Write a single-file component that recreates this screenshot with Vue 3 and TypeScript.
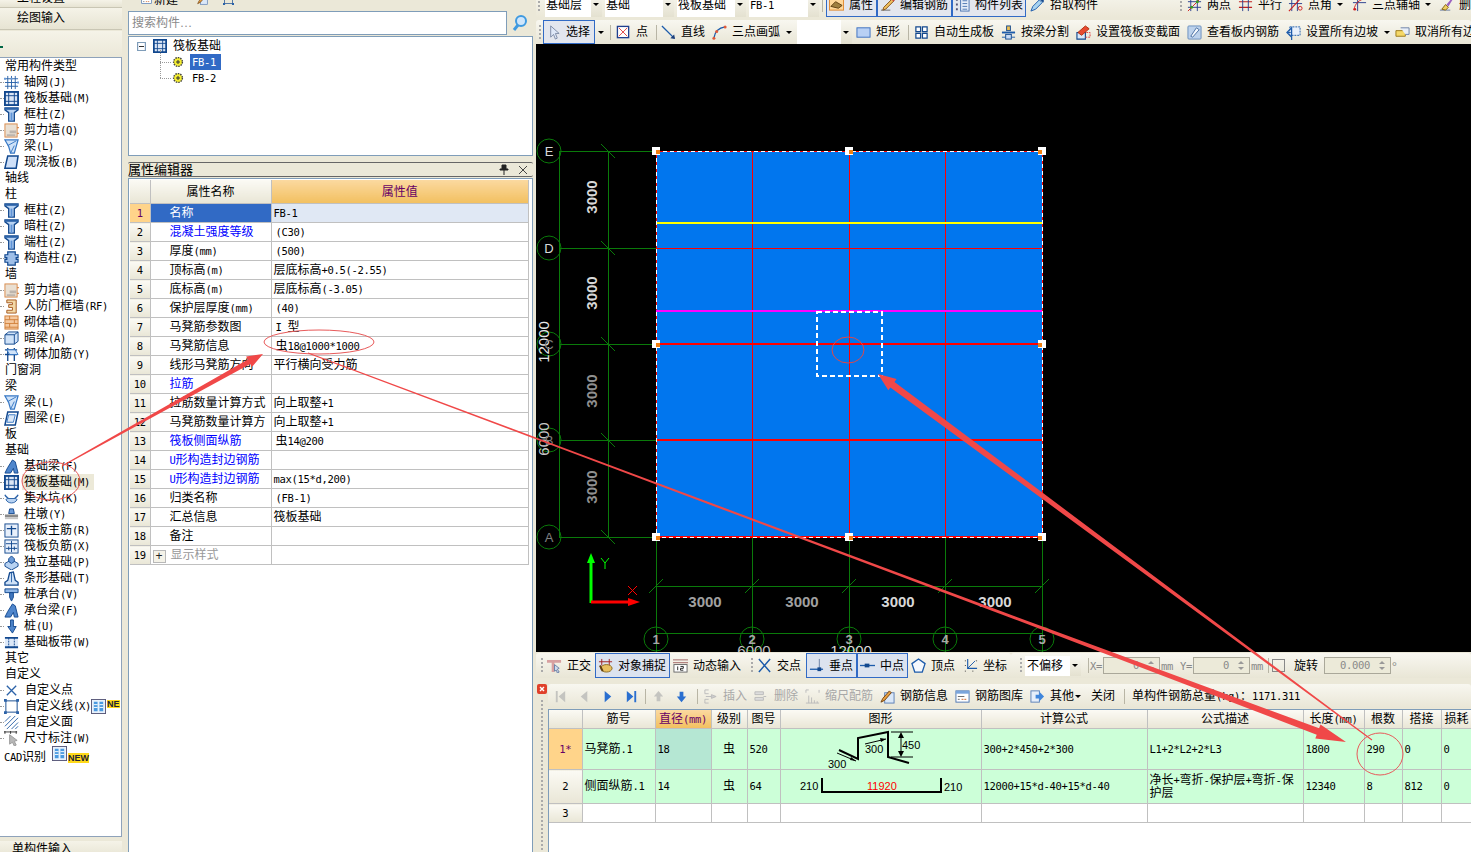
<script setup lang="ts">
import { h, type FunctionalComponent } from 'vue'

const Tx: FunctionalComponent<{ t: string }> = (p) =>
  p.t
    .split(/([\x20-\x7e]+)/)
    .filter(Boolean)
    .map((s) => (/^[\x20-\x7e]/.test(s) ? h('span', { class: 'lat' }, s) : s))
Tx.props = ['t']

type SideRow = { t: string; i?: string; hl?: boolean; badge?: boolean; wide?: boolean }
const sideRows: SideRow[] = [
  { t: '常用构件类型' },
  { t: '轴网(J)', i: 'grid' }, { t: '筏板基础(M)', i: 'raft' }, { t: '框柱(Z)', i: 'col' },
  { t: '剪力墙(Q)', i: 'wall' }, { t: '梁(L)', i: 'beam' }, { t: '现浇板(B)', i: 'slab' },
  { t: '轴线' }, { t: '柱' },
  { t: '框柱(Z)', i: 'col' }, { t: '暗柱(Z)', i: 'col' }, { t: '端柱(Z)', i: 'col' }, { t: '构造柱(Z)', i: 'colf' },
  { t: '墙' },
  { t: '剪力墙(Q)', i: 'wall' }, { t: '人防门框墙(RF)', i: 'rf' }, { t: '砌体墙(Q)', i: 'brick' },
  { t: '暗梁(A)', i: 'dark' }, { t: '砌体加筋(Y)', i: 'rebar' },
  { t: '门窗洞' }, { t: '梁' },
  { t: '梁(L)', i: 'beam' }, { t: '圈梁(E)', i: 'ring' },
  { t: '板' }, { t: '基础' },
  { t: '基础梁(F)', i: 'fbeam' }, { t: '筏板基础(M)', i: 'raft', hl: true }, { t: '集水坑(K)', i: 'pit' },
  { t: '柱墩(Y)', i: 'pier' }, { t: '筏板主筋(R)', i: 'main' }, { t: '筏板负筋(X)', i: 'neg' },
  { t: '独立基础(P)', i: 'iso' }, { t: '条形基础(T)', i: 'strip' }, { t: '桩承台(V)', i: 'cap' },
  { t: '承台梁(F)', i: 'fbeam' }, { t: '桩(U)', i: 'pile' }, { t: '基础板带(W)', i: 'band' },
  { t: '其它' }, { t: '自定义' },
  { t: '自定义点', i: 'pt', wide: true }, { t: '自定义线(X)', i: 'sq', badge: true, wide: true },
  { t: '自定义面', i: 'face', wide: true }, { t: '尺寸标注(W)', i: 'dim' },
  { t: 'CAD识别', badge: true },
]

const props = [
  ['名称', 'FB-1', 0], ['混凝土强度等级', ' (C30)', 1], ['厚度(mm)', ' (500)', 0], ['顶标高(m)', '层底标高+0.5(-2.55)', 0],
  ['底标高(m)', '层底标高(-3.05)', 0], ['保护层厚度(mm)', ' (40)', 0], ['马凳筋参数图', ' I 型', 0], ['马凳筋信息', ' 虫18@1000*1000', 0],
  ['线形马凳筋方向', '平行横向受力筋', 0], ['拉筋', '', 1], ['拉筋数量计算方式', '向上取整+1', 0], ['马凳筋数量计算方', '向上取整+1', 0],
  ['筏板侧面纵筋', ' 虫14@200', 1], ['U形构造封边钢筋', '', 1], ['U形构造封边钢筋', 'max(15*d,200)', 1], ['归类名称', ' (FB-1)', 0],
  ['汇总信息', '筏板基础', 0], ['备注', '', 0], ['显示样式', '', 2],
] as [string, string, number][]

type Item = { a: number; b: number; i?: string; t?: string; on?: boolean; off?: boolean; sep?: boolean; dd?: boolean; box?: boolean; grip?: boolean; ml?: number }
function lay(start: number, items: Item[]): Item[] {
  let p = start
  return items.map((it) => { const r = { ...it, ml: it.a - p }; p = it.b; return r })
}
const rowTop = lay(536, [
  { a: 538, b: 540, grip: true },
  { a: 545, b: 602, t: '基础层', box: true, dd: true }, { a: 605, b: 674, t: '基础', box: true, dd: true },
  { a: 677, b: 746, t: '筏板基础', box: true, dd: true }, { a: 749, b: 819, t: 'FB-1', box: true, dd: true },
  { a: 822, b: 823, sep: true },
  { a: 826, b: 877, i: 'prop', t: '属性', on: true }, { a: 877, b: 952, i: 'edit', t: '编辑钢筋', on: true }, { a: 952, b: 1026, i: 'list', t: '构件列表', on: true },
  { a: 1030, b: 1103, i: 'pick', t: '拾取构件' },
  { a: 1180, b: 1182, grip: true },
  { a: 1187, b: 1230, i: 'two', t: '两点' }, { a: 1238, b: 1282, i: 'par', t: '平行' }, { a: 1288, b: 1332, i: 'ang', t: '点角', dd: true },
  { a: 1352, b: 1423, i: 'arcx', t: '三点辅轴', dd: true }, { a: 1439, b: 1480, i: 'del', t: '删除' },
])
const rowDraw = lay(536, [
  { a: 539, b: 541, grip: true },
  { a: 543, b: 595, i: 'sel', t: '选择', on: true }, { a: 597, b: 605, dd: true }, { a: 610, b: 611, sep: true },
  { a: 616, b: 650, i: 'point', t: '点' }, { a: 656, b: 657, sep: true }, { a: 661, b: 705, i: 'line', t: '直线' },
  { a: 712, b: 780, i: 'arc', t: '三点画弧' }, { a: 785, b: 793, dd: true },
  { a: 797, b: 852, box: true, dd: true }, { a: 856, b: 901, i: 'rect', t: '矩形' }, { a: 908, b: 909, sep: true },
  { a: 914, b: 993, i: 'auto', t: '自动生成板' }, { a: 1001, b: 1068, i: 'split', t: '按梁分割' },
  { a: 1076, b: 1180, i: 'vary', t: '设置筏板变截面' }, { a: 1187, b: 1279, i: 'view', t: '查看板内钢筋' },
  { a: 1286, b: 1378, i: 'slope', t: '设置所有边坡' }, { a: 1383, b: 1391, dd: true }, { a: 1395, b: 1500, i: 'cancel', t: '取消所有边坡' },
])
const rowSnap = lay(536, [
  { a: 541, b: 543, grip: true },
  { a: 547, b: 590, i: 'ortho', t: '正交' }, { a: 595, b: 670, i: 'snap', t: '对象捕捉', on: true }, { a: 673, b: 741, i: 'dyn', t: '动态输入' },
  { a: 751, b: 753, grip: true },
  { a: 757, b: 801, i: 'cross', t: '交点' }, { a: 806, b: 857, i: 'perp', t: '垂点', on: true }, { a: 857, b: 908, i: 'mid', t: '中点', on: true },
  { a: 911, b: 954, i: 'vertex', t: '顶点' }, { a: 963, b: 1006, i: 'coord', t: '坐标' },
])
const rowEdit = lay(548, [
  { a: 553, b: 567, i: 'first', off: true }, { a: 577, b: 591, i: 'prev', off: true }, { a: 600, b: 614, i: 'next' }, { a: 624, b: 638, i: 'last' },
  { a: 645, b: 646, sep: true }, { a: 651, b: 665, i: 'up', off: true }, { a: 674, b: 688, i: 'down' }, { a: 697, b: 698, sep: true },
  { a: 703, b: 746, i: 'ins', t: '插入', off: true }, { a: 754, b: 797, i: 'rem', t: '删除', off: true }, { a: 805, b: 873, i: 'scale', t: '缩尺配筋', off: true },
  { a: 880, b: 947, i: 'info', t: '钢筋信息' }, { a: 955, b: 1023, i: 'lib', t: '钢筋图库' }, { a: 1030, b: 1072, i: 'other', t: '其他' },
  { a: 1074, b: 1082, dd: true }, { a: 1091, b: 1115, t: '关闭' }, { a: 1124, b: 1125, sep: true }, { a: 1132, b: 1320, t: '单构件钢筋总量(kg)：1171.311' },
])

const gridCols = [33, 73, 56, 36, 33, 201, 166, 156, 61, 38, 39, 31]
const gridHead = ['', '筋号', '直径(mm)', '级别', '图号', '图形', '计算公式', '公式描述', '长度(mm)', '根数', '搭接', '损耗']

function taper(x0: number, y0: number, x1: number, y1: number, stops: [number, number][], hl: number, hw: number) {
  const len = Math.hypot(x1 - x0, y1 - y0)
  const ux = (x1 - x0) / len, uy = (y1 - y0) / len
  const nx = -uy, ny = ux
  const shaft = len - hl
  const at = (t: number, w: number, s: number) => [x0 + ux * shaft * t + s * nx * w / 2, y0 + uy * shaft * t + s * ny * w / 2]
  const bx = x1 - ux * hl, by = y1 - uy * hl
  const pts = [
    ...stops.map(([t, w]) => at(t, w, 1)),
    [bx + nx * hw / 2, by + ny * hw / 2], [x1, y1], [bx - nx * hw / 2, by - ny * hw / 2],
    ...stops.slice().reverse().map(([t, w]) => at(t, w, -1)),
  ]
  return pts.map((q) => q[0].toFixed(1) + ',' + q[1].toFixed(1)).join(' ')
}
const arrowA = taper(62, 466, 263, 354, [[0, 1], [1, 5]], 16, 12)
const arrowB = taper(308, 353, 1346, 742, [[0, 1.2], [0.7, 2.8], [1, 7]], 30, 15)
const arrowC = taper(1372, 740, 878, 374, [[0, 1], [1, 7]], 18, 14)

const colX = [656, 752, 849, 945, 1042]
const rowY = [151, 248, 344, 440, 537]
const handles = [[656, 151], [849, 151], [1042, 151], [656, 344], [1042, 344], [656, 537], [849, 537], [1042, 537]]
const vDims = [[197, '#d8d8d8'], [293, '#d8d8d8'], [391, '#909090'], [487, '#909090']] as [number, string][]
const hDims = [[705, '#a0a0a0'], [802, '#a0a0a0'], [898, '#d8d8d8'], [995, '#d8d8d8']] as [number, string][]
</script>

<template>
  <div class="app">
    <svg class="defs" width="0" height="0" aria-hidden="true">
      <defs>
        <symbol id="i-grid" viewBox="0 0 16 16"><path d="M1 4h14M1 8h14M1 12h14M4 1v14M8 1v14M12 1v14" stroke="#2b62a8" fill="none"/><path d="M0 3h2v2H0zM7 3h2v2H7zM14 7h2v2h-2z" fill="#6a9ad8"/></symbol>
        <symbol id="i-raft" viewBox="0 0 16 16"><rect x="1" y="1" width="14" height="14" fill="#dbe6f5" stroke="#12488e" stroke-width="2"/><path d="M5 1v14M11 1v14M1 5h14M1 11h14" stroke="#12488e"/></symbol>
        <symbol id="i-col" viewBox="0 0 16 16"><path d="M1 1h14v2l-4 3v9H5V6L1 3z" fill="#b7d2f2" stroke="#12488e" stroke-width="1.4"/><path d="M1 1h14v2H1z" fill="#2b62a8"/><path d="M7 6h2v9H7z" fill="#5e93d6"/></symbol>
        <symbol id="i-colf" viewBox="0 0 16 16"><path d="M4 1h8v3h3v3h-2v2h2v3h-3v3H4v-3H1V9h2V7H1V4h3z" fill="#9fbfe8" stroke="#12488e" stroke-width="1.3"/></symbol>
        <symbol id="i-wall" viewBox="0 0 16 16"><rect x="1" y="1" width="13" height="14" fill="#e9dfd2" stroke="#d88a4a"/><path d="M3 12h9v2H3zM6 8h7v3H6z" fill="#bdb5ad"/><path d="M14 5h2M14 11h2" stroke="#d0702a"/></symbol>
        <symbol id="i-beam" viewBox="0 0 16 16"><path d="M1 1h14l-4 14H7L5 8z" fill="#cfe2f8" stroke="#3677c4" stroke-width="1.3"/><path d="M4 7l9-5M7 15l4-8" stroke="#3677c4"/></symbol>
        <symbol id="i-slab" viewBox="0 0 16 16"><path d="M4 1h11l-2 13H1z" fill="#cfe0f8" stroke="#12488e" stroke-width="1.6"/></symbol>
        <symbol id="i-rf" viewBox="0 0 16 16"><path d="M3 1h10v14H3v-3h6V9H5V6h4V4H3z" fill="#f3d9a8" stroke="#a4571d"/></symbol>
        <symbol id="i-brick" viewBox="0 0 16 16"><rect x="1" y="1" width="14" height="14" fill="#f5c9a0" stroke="#d07f3a"/><path d="M1 5h14M1 9h14M1 13h14M6 1v4M11 5v4M6 9v4" stroke="#d07f3a"/></symbol>
        <symbol id="i-dark" viewBox="0 0 16 16"><path d="M1 4l4-3h10v10l-4 3H1z" fill="#cfe2f8" stroke="#12488e"/><path d="M1 4h10v10M11 4l4-3" stroke="#12488e" fill="none"/></symbol>
        <symbol id="i-rebar" viewBox="0 0 16 16"><path d="M1 3h13M1 8h13M4 1v14M11 1v14" stroke="#12488e" stroke-width="1.4" fill="none"/><path d="M3 3h9l3 5H6z" fill="#cfe2f8" stroke="#3677c4"/></symbol>
        <symbol id="i-ring" viewBox="0 0 16 16"><path d="M4 1h11l-3 14H1z" fill="#fff" stroke="#12488e" stroke-width="1.6"/><path d="M5 4h7l-2 8H3z" fill="#dbe8f8" stroke="#3677c4"/></symbol>
        <symbol id="i-fbeam" viewBox="0 0 16 16"><path d="M1 15l3-6 5-8 3 2 3 12h-4l-1-5-3 5z" fill="#4f86cc" stroke="#12488e"/></symbol>
        <symbol id="i-pit" viewBox="0 0 16 16"><path d="M1 4c1 3 3 2 4 5h6c1-3 3-2 4-5" fill="none" stroke="#2b62a8" stroke-width="1.4"/><path d="M2 9c2 5 10 5 12 0l-2-1H4z" fill="#b7d2f2" stroke="#2b62a8"/></symbol>
        <symbol id="i-pier" viewBox="0 0 16 16"><path d="M6 2h4l1 5H5z" fill="#6a9ad8" stroke="#12488e"/><rect x="1" y="8" width="14" height="3" fill="#8a8a8a"/><rect x="1" y="11" width="14" height="2" fill="#c6c6c6"/></symbol>
        <symbol id="i-main" viewBox="0 0 16 16"><rect x="1" y="1" width="14" height="14" fill="#e8f0fb" stroke="#12488e"/><path d="M3 6h10M8 3v10" stroke="#12488e" stroke-width="1.4"/></symbol>
        <symbol id="i-neg" viewBox="0 0 16 16"><rect x="1" y="1" width="14" height="14" fill="#e8f0fb" stroke="#12488e"/><path d="M2 5h12M2 10h12M8 2v12M5 8v4M11 8v4" stroke="#12488e"/></symbol>
        <symbol id="i-iso" viewBox="0 0 16 16"><path d="M1 9l7-4 7 4v3l-7 4-7-4z" fill="#b7d2f2" stroke="#12488e"/><path d="M5 4l3-3 3 3v3l-3 2-3-2z" fill="#6a9ad8" stroke="#12488e"/></symbol>
        <symbol id="i-strip" viewBox="0 0 16 16"><path d="M1 15v-3l3-2 2-8 4-1 2 9 3 2v3z" fill="#cfe2f8" stroke="#12488e" stroke-width="1.4"/><path d="M8 2v10" stroke="#2b62a8"/></symbol>
        <symbol id="i-cap" viewBox="0 0 16 16"><path d="M1 2h14v4H1z" fill="#8fb6e6" stroke="#12488e"/><path d="M6 6h4v5l-2 4-2-4z" fill="#3f75bd" stroke="#12488e"/></symbol>
        <symbol id="i-pile" viewBox="0 0 16 16"><path d="M7 1h3v7h3l-4 7-5-7h3z" fill="#4f86cc" stroke="#12488e"/></symbol>
        <symbol id="i-band" viewBox="0 0 16 16"><rect x="1" y="3" width="14" height="10" fill="#dce8f8"/><path d="M1 3h14M1 13h14" stroke="#12488e" stroke-width="2"/><path d="M5 3v10M11 3v10" stroke="#12488e" stroke-dasharray="2 1"/></symbol>
        <symbol id="i-pt" viewBox="0 0 16 16"><path d="M3 3l10 10M13 3L3 13" stroke="#2b62a8" stroke-width="1.4"/></symbol>
        <symbol id="i-sq" viewBox="0 0 16 16"><rect x="2" y="2" width="12" height="12" fill="none" stroke="#12488e"/><path d="M0 0h3v3H0zM13 0h3v3h-3zM0 13h3v3H0zM13 13h3v3h-3z" fill="#2b62a8"/></symbol>
        <symbol id="i-face" viewBox="0 0 16 16"><path d="M1 7l6-6M1 12L12 1M3 15L15 3M8 15l7-7M12 15l3-3" stroke="#2b62a8"/></symbol>
        <symbol id="i-dim" viewBox="0 0 16 16"><path d="M0 1h14M1 0v3M7 0v3M13 0v3" stroke="#333"/><path d="M6 4l8 6-3 1 2 4-2 1-2-4-3 2z" fill="#b8b8b8" stroke="#999"/></symbol>
        <symbol id="i-newb" viewBox="0 0 16 16"><rect x="0.5" y="0.5" width="15" height="15" fill="#e8f2fc" stroke="#557"/><path d="M3 3h4v10H3zM9 3h4v10H9z" fill="#4a9ae0"/><path d="M3 6h4M3 9h4M9 6h4M9 9h4" stroke="#fff"/></symbol>
        <symbol id="i-sel" viewBox="0 0 16 16"><path d="M5 1v12l3-3 2 5 2-1-2-5h4z" fill="#dfe8f8" stroke="#7c8aa5"/></symbol>
        <symbol id="i-point" viewBox="0 0 16 16"><rect x="1.5" y="1.5" width="12" height="12" fill="#fff" stroke="#1f3f8f" stroke-width="1.4"/><path d="M3 3l9 9M12 3l-9 9" stroke="#e04040"/></symbol>
        <symbol id="i-line" viewBox="0 0 16 16"><path d="M1 1l13 13" stroke="#1c5bab" stroke-width="1.4"/><path d="M15 15l-5-1 4-4z" fill="#1c3f7b"/></symbol>
        <symbol id="i-arc" viewBox="0 0 16 16"><path d="M2 14C3 7 7 3 14 2" stroke="#1c5bab" stroke-width="1.4" fill="none"/><circle cx="2" cy="14" r="1.6" fill="#e05a3a"/><circle cx="14" cy="2" r="1.6" fill="#e05a3a"/><circle cx="5" cy="7" r="1.6" fill="#e05a3a"/></symbol>
        <symbol id="i-rect" viewBox="0 0 16 16"><rect x="1" y="3" width="14" height="10" fill="#b8d0f4" stroke="#3a6fc0"/></symbol>
        <symbol id="i-auto" viewBox="0 0 16 16"><path d="M2 2h5v5H2zM9 2h5v5H9zM2 9h5v5H2zM9 9h5v5H9z" fill="#fff" stroke="#12488e" stroke-width="1.3"/></symbol>
        <symbol id="i-split" viewBox="0 0 16 16"><rect x="6" y="1" width="4" height="5" fill="#f0c050" stroke="#12488e"/><path d="M1 8h14" stroke="#1c5bab" stroke-width="2"/><rect x="5" y="10" width="6" height="5" fill="#c9dcf5" stroke="#12488e"/><path d="M1 13h4M11 13h4" stroke="#1c5bab"/></symbol>
        <symbol id="i-vary" viewBox="0 0 16 16"><path d="M1 8h9v7H1z" fill="#dbe8f8" stroke="#12488e" stroke-width="1.2"/><path d="M2 8l8-7 4 3-8 7z" fill="#e84a30" stroke="#b03010"/><path d="M11 8h4v5h-5" stroke="#e04040" stroke-dasharray="2 1" fill="none"/></symbol>
        <symbol id="i-view" viewBox="0 0 16 16"><rect x="1" y="1" width="14" height="14" rx="1" fill="#bdd2ec" stroke="#6a8fbe"/><path d="M4 12l6-9 3 2-7 8z" fill="#f4f8fd" stroke="#4a6fa2"/></symbol>
        <symbol id="i-slope" viewBox="0 0 16 16"><path d="M4 2h11v9H4z" fill="#e8f0fb" stroke="#1c5bab" stroke-dasharray="2 1"/><path d="M1 8l5-5v10zM6 13v3M1 8h4" stroke="#1c5bab" fill="none" stroke-width="1.3"/></symbol>
        <symbol id="i-cancel" viewBox="0 0 16 16"><path d="M1 6h10v6H1z" fill="#f5d868" stroke="#9a7a1a"/><path d="M6 3h9v7h-4" fill="#e8eef8" stroke="#6a7fa5"/></symbol>
        <symbol id="i-prop" viewBox="0 0 16 16"><rect x="0.5" y="2" width="15" height="12" fill="#ffd89a" stroke="#e08a30"/><path d="M2 10l5-5 7 4-4 3z" fill="#a08040" stroke="#604010"/></symbol>
        <symbol id="i-edit" viewBox="0 0 16 16"><path d="M1 14h10" stroke="#666"/><path d="M4 11l9-9 2 2-9 9-3 1z" fill="#f0c060" stroke="#80501a"/><path d="M13 2l2 2" stroke="#d04040" stroke-width="2"/></symbol>
        <symbol id="i-list" viewBox="0 0 16 16"><path d="M1 2h2v2H1zM1 7h2v2H1zM1 12h2v2H1z" fill="#557"/><rect x="6" y="1" width="9" height="14" fill="#e6eefa" stroke="#4a74b0"/><path d="M8 4h5M8 7h5M8 10h5M8 13h5" stroke="#4a74b0"/></symbol>
        <symbol id="i-pick" viewBox="0 0 16 16"><path d="M1 15l2-5 7-7 3 3-7 7z" fill="#a8d4f0" stroke="#1c5bab"/><path d="M10 2l2-1 3 3-1 2z" fill="#12488e"/></symbol>
        <symbol id="i-two" viewBox="0 0 16 16"><path d="M1 5h14M1 11h14M4 1v14M11 1v14" stroke="#2a3f8f"/><path d="M1 15L15 1" stroke="#d02020"/><circle cx="11" cy="5" r="1.6" fill="#3a9a20"/><circle cx="5" cy="11" r="1.6" fill="#3a9a20"/></symbol>
        <symbol id="i-par" viewBox="0 0 16 16"><path d="M1 5h14M1 11h14" stroke="#c02020" stroke-width="1.2"/><path d="M5 1v14M11 1v14" stroke="#2a3f8f"/></symbol>
        <symbol id="i-ang" viewBox="0 0 16 16"><path d="M1 7h14M4 1v14M10 1v14" stroke="#2a3f8f"/><path d="M1 15L14 1" stroke="#d02020" stroke-width="1.2"/><circle cx="13" cy="12" r="2" fill="none" stroke="#d02020"/></symbol>
        <symbol id="i-arcx" viewBox="0 0 16 16"><path d="M1 6h14M6 1v14" stroke="#2a3f8f"/><path d="M2 14C3 7 8 2 15 2" stroke="#d02020" fill="none"/><circle cx="3" cy="13" r="1.4" fill="#d02020"/></symbol>
        <symbol id="i-del" viewBox="0 0 16 16"><path d="M1 14h11" stroke="#6a7fa5"/><path d="M3 13l4-5 3 3-3 3z" fill="#f0d060" stroke="#806010"/><path d="M8 8l6-7 1 1-5 8z" fill="#9a60c0"/></symbol>
        <symbol id="i-ortho" viewBox="0 0 16 16"><path d="M0 2h15v3H8v10H5V5H0z" fill="#d8a0a0"/><path d="M8 7l5 4-2 1 2 3-2 1-1-3-2 1z" fill="#cfdcee" stroke="#6a7fa5"/></symbol>
        <symbol id="i-snap" viewBox="0 0 16 16"><path d="M4 1v7M12 1v7M1 4h14" stroke="#a02020"/><ellipse cx="9" cy="11" rx="6" ry="4" fill="#e8c060" stroke="#8a6a20"/><path d="M2 8l3 6" stroke="#604010" stroke-width="2"/></symbol>
        <symbol id="i-dyn" viewBox="0 0 16 16"><path d="M0 2h16M0 5h16" stroke="#a06060"/><rect x="1" y="7" width="14" height="8" fill="#fff" stroke="#666"/><path d="M5 9v4M8 9h3v2H8v2h3" stroke="#222" fill="none"/></symbol>
        <symbol id="i-cross" viewBox="0 0 16 16"><path d="M2 1l12 14M14 1L2 15" stroke="#1c5bab" stroke-width="1.5"/></symbol>
        <symbol id="i-perp" viewBox="0 0 16 16"><path d="M1 12h14" stroke="#1c5bab" stroke-width="1.4"/><path d="M11 1v11" stroke="#6a7fa5"/><rect x="9" y="10" width="4" height="4" fill="#12488e"/></symbol>
        <symbol id="i-mid" viewBox="0 0 16 16"><path d="M0 8h16" stroke="#1c5bab" stroke-width="1.4"/><rect x="5" y="6" width="5" height="4" fill="#12488e"/></symbol>
        <symbol id="i-vertex" viewBox="0 0 16 16"><path d="M8 1l7 5-3 9H4L1 6z" fill="#f4f8fd" stroke="#1c5bab" stroke-width="1.4"/></symbol>
        <symbol id="i-coord" viewBox="0 0 16 16"><path d="M5 1v10h10" stroke="#1c5bab" stroke-width="1.2" fill="none"/><path d="M5 11l8-8" stroke="#1c5bab"/><path d="M2 3h2M2 8h2M2 14h2M10 14h2M14 3h2" stroke="#333" stroke-dasharray="1 1"/></symbol>
        <symbol id="i-first" viewBox="0 0 16 16"><path d="M3 2h2v12H3zM13 2v12L6 8z" fill="#c4c4c0"/></symbol>
        <symbol id="i-prev" viewBox="0 0 16 16"><path d="M11 2v12L4 8z" fill="#c4c4c0"/></symbol>
        <symbol id="i-next" viewBox="0 0 16 16"><path d="M5 2v12l7-6z" fill="#2a6fd0"/></symbol>
        <symbol id="i-last" viewBox="0 0 16 16"><path d="M3 2v12l7-6zM11 2h2v12h-2z" fill="#2a6fd0"/></symbol>
        <symbol id="i-up" viewBox="0 0 16 16"><path d="M8 2l5 6h-3v5H6V8H3z" fill="#c4c4c0"/></symbol>
        <symbol id="i-down" viewBox="0 0 16 16"><path d="M6 3h4v5h3l-5 6-5-6h3z" fill="#2a6fd0"/></symbol>
        <symbol id="i-ins" viewBox="0 0 16 16"><path d="M6 1H2v4h4M6 11H2v4h4" stroke="#bbb" fill="none"/><path d="M3 8h6V6l5 2-5 2V8" fill="#ccc" stroke="#bbb"/></symbol>
        <symbol id="i-rem" viewBox="0 0 16 16"><path d="M1 3h9v3H1zM1 9h9v3H1z" fill="#ddd" stroke="#bbb"/><path d="M10 8h3" stroke="#bbb"/></symbol>
        <symbol id="i-scale" viewBox="0 0 16 16"><path d="M1 4V1h3M15 1v3M1 15h14M4 15V7M7 15V9M10 15v-3M13 15v-2" stroke="#bbb" fill="none"/></symbol>
        <symbol id="i-info" viewBox="0 0 16 16"><rect x="5" y="4" width="10" height="11" fill="#dbe8f8" stroke="#5a7fb5"/><path d="M1 14l2-4 7-8 2 2-7 8z" fill="#e8a040" stroke="#704010"/></symbol>
        <symbol id="i-lib" viewBox="0 0 16 16"><rect x="1" y="2" width="14" height="12" fill="#fff" stroke="#4a74b0"/><rect x="1" y="2" width="14" height="3" fill="#7aa5dc"/><path d="M3 8h7M3 11h2" stroke="#666"/><path d="M7 11h2M10 11h2" stroke="#d06020"/></symbol>
        <symbol id="i-other" viewBox="0 0 16 16"><rect x="1" y="2" width="9" height="12" fill="#e6eefa" stroke="#5a7fb5"/><path d="M6 6h4V3l5 5-5 5v-3H6z" fill="#3f86dc"/></symbol>
        <symbol id="i-gear" viewBox="0 0 12 12"><circle cx="6" cy="6" r="4.4" fill="#f5ee30" stroke="#444" stroke-width="1.4" stroke-dasharray="1.5 1"/><path d="M4 6h4M6 4v4" stroke="#333"/></symbol>
      </defs>
    </svg>

    <aside class="side">
      <div class="tab tab-clip"><span>工程设置</span></div>
      <div class="tab"><span>绘图输入</span></div>
      <div class="side-head"><i class="mark"></i></div>
      <div class="side-list">
        <div v-for="(r, n) in sideRows" :key="n" class="side-row" :class="{ cat: !r.i && !r.badge, 'hl': r.hl, cad: !r.i && r.badge, wide: r.wide }">
          <svg v-if="r.i" class="side-ic"><use :href="'#i-' + r.i" /></svg>
          <span class="side-t" :class="{ hlt: r.hl }"><Tx :t="r.t" /></span>
          <template v-if="r.badge">
            <svg class="new-ic"><use href="#i-newb" /></svg>
            <span class="new-b">{{ r.wide ? 'NE' : 'NEW' }}</span>
          </template>
        </div>
      </div>
      <div class="tab tab-bottom"><span>单构件输入</span></div>
    </aside>

    <section class="mid">
      <div class="mid-tools">
        <svg class="ic mt1"><use href="#i-lib" /></svg><span>新建</span>
        <svg class="ic mt2"><use href="#i-info" /></svg>
        <svg class="ic mt3"><use href="#i-sq" /></svg>
      </div>
      <div class="search">
        <div class="search-in">搜索构件…</div>
        <div class="search-btn">
          <svg width="18" height="18" viewBox="0 0 18 18"><circle cx="10" cy="7" r="5" fill="#cfe6fb" stroke="#3f9ae0" stroke-width="2"/><path d="M7 11l-4 5" stroke="#3f9ae0" stroke-width="3"/></svg>
        </div>
      </div>
      <div class="tree">
        <div class="tree-row">
          <i class="minus"></i>
          <svg class="side-ic tree-ic"><use href="#i-raft" /></svg>
          <span class="tree-root">筏板基础</span>
        </div>
        <div class="tree-row leaf"><i class="dots"></i><svg class="gear"><use href="#i-gear" /></svg><span class="leaf-t sel"><Tx t="FB-1" /></span></div>
        <div class="tree-row leaf"><i class="dots"></i><svg class="gear"><use href="#i-gear" /></svg><span class="leaf-t"><Tx t="FB-2" /></span></div>
      </div>
      <div class="ph">
        <span>属性编辑器</span>
        <span class="ph-icons">
          <svg width="10" height="11" viewBox="0 0 10 11"><path d="M3 1h4v4h2v1H1V5h2zM5 6v5" stroke="#222" fill="#222"/></svg>
          <svg width="10" height="10" viewBox="0 0 10 10"><path d="M1 1l8 8M9 1L1 9" stroke="#444"/></svg>
        </span>
      </div>
      <div class="prop-panel">
        <table class="ptable">
          <colgroup><col class="c1" /><col class="c2" /><col /></colgroup>
          <thead>
            <tr><th class="rh"></th><th>属性名称</th><th class="val-h">属性值</th></tr>
          </thead>
          <tbody>
            <tr v-for="(p, n) in props" :key="n" :class="{ first: n === 0 }">
              <td class="rh"><Tx :t="String(n + 1)" /></td>
              <td class="pn" :class="{ link: p[2] === 1, mute: p[2] === 2 }">
                <i v-if="p[2] === 2" class="plus">+</i><Tx :t="p[0]" />
              </td>
              <td class="pv" :class="{ ind: p[1].startsWith(' ') }"><Tx :t="p[1].trim()" /></td>
            </tr>
          </tbody>
        </table>
      </div>
    </section>

    <section class="right">
      <div class="bar-top">
        <div class="bar-top-in">
          <template v-for="(it, n) in rowTop" :key="n">
            <i v-if="it.grip" class="grip" :style="{ marginLeft: it.ml + 'px' }"></i>
            <i v-else-if="it.sep" class="sep" :style="{ marginLeft: it.ml + 'px' }"></i>
            <div v-else class="tool" :class="{ on: it.on, box: it.box }" :style="{ marginLeft: it.ml + 'px', width: it.b - it.a + 'px' }">
              <svg v-if="it.i" class="ic"><use :href="'#i-' + it.i" /></svg>
              <span v-if="it.t" class="tt"><Tx :t="it.t" /></span>
              <i v-if="it.dd" class="dd" :class="{ btn: it.box }"></i>
            </div>
          </template>
        </div>
      </div>
      <div class="bar">
        <template v-for="(it, n) in rowDraw" :key="n">
          <i v-if="it.grip" class="grip" :style="{ marginLeft: it.ml + 'px' }"></i>
          <i v-else-if="it.sep" class="sep" :style="{ marginLeft: it.ml + 'px' }"></i>
          <div v-else class="tool" :class="{ on: it.on, box: it.box }" :style="{ marginLeft: it.ml + 'px', width: it.b - it.a + 'px' }">
            <svg v-if="it.i" class="ic"><use :href="'#i-' + it.i" /></svg>
            <span v-if="it.t" class="tt"><Tx :t="it.t" /></span>
            <i v-if="it.dd" class="dd" :class="{ btn: it.box }"></i>
          </div>
        </template>
      </div>

      <svg class="cad" viewBox="536 44 935 608" width="935" height="608">
        <rect x="536" y="44" width="935" height="608" fill="#000" />
        <rect x="656" y="151" width="386" height="386" fill="#0176ee" />
        <g stroke="#0a7a0a" fill="none">
          <g shape-rendering="crispEdges">
            <path v-for="y in rowY" :key="'gh' + y" :d="`M559 ${y}H656`" />
            <path d="M559 151V537M608 151V537" />
            <path v-for="x in colX" :key="'gv' + x" :d="`M${x} 537V652`" />
            <path d="M656 586H1042M656 633H1042" />
          </g>
          <path v-for="y in rowY" :key="'ts' + y" :d="`M601 ${y - 7}L615 ${y + 7}`" />
          <path v-for="x in colX" :key="'tx' + x" :d="`M${x - 7} 593L${x + 7} 579`" />
          <circle v-for="y in rowY" :key="'cy' + y" cx="549" :cy="y" r="12" />
          <circle v-for="x in colX" :key="'cx' + x" :cx="x" cy="639" r="12" />
        </g>
        <g stroke="#f00" shape-rendering="crispEdges">
          <path v-for="x in colX" :key="'rv' + x" :d="`M${x} 151V537`" />
          <path d="M656 151H1042M656 248H1042" />
          <path d="M656 344H1042M656 440H1042M656 537H1042" stroke-width="2" />
        </g>
        <path d="M656 223H1042" stroke="#ff0" stroke-width="2" shape-rendering="crispEdges" />
        <path d="M656 311H1042" stroke="#f0f" stroke-width="2" shape-rendering="crispEdges" />
        <rect x="656" y="151" width="386" height="386" fill="none" stroke="#fff" stroke-dasharray="4 3" shape-rendering="crispEdges" />
        <rect x="817" y="312" width="65" height="64" fill="none" stroke="#fff" stroke-width="2" stroke-dasharray="5 3" shape-rendering="crispEdges" />
        <ellipse cx="848" cy="350" rx="16" ry="13" fill="none" stroke="#e04848" />
        <g v-for="(q, n) in handles" :key="'hd' + n">
          <rect :x="q[0] - 4" :y="q[1] - 4" width="8" height="8" fill="#fff" />
          <rect :x="q[0] + (q[0] === 1042 ? -4 : 0)" :y="q[1] - 1" width="4" height="4" fill="#f08010" />
        </g>
        <g font-family="'Liberation Sans', sans-serif" font-size="15" text-anchor="middle">
          <text v-for="d in vDims" :key="'vd' + d[0]" :transform="`translate(597 ${d[0]}) rotate(-90)`" :fill="d[1]" font-weight="bold">3000</text>
          <text v-for="d in hDims" :key="'hd' + d[0]" :x="d[0]" y="607" :fill="d[1]" font-weight="bold">3000</text>
          <text transform="translate(549 342) rotate(-90)" fill="#e8e8e8">12000</text>
          <text transform="translate(549 439) rotate(-90)" fill="#c8c8c8">6000</text>
          <text x="754" y="656" fill="#c0c0c0">6000</text>
          <text x="851" y="656" fill="#d8d8d8">12000</text>
          <text x="549" y="156" fill="#d8d8d8" font-size="13">E</text>
          <text x="549" y="253" fill="#d8d8d8" font-size="13">D</text>
          <text x="549" y="349" fill="#808080" font-size="13">C</text>
          <text x="549" y="445" fill="#808080" font-size="13">B</text>
          <text x="549" y="542" fill="#808080" font-size="13">A</text>
          <text v-for="(x, n) in colX" :key="'nb' + x" :x="x" y="644" fill="#a8a8a8" font-size="13" font-weight="bold">{{ n + 1 }}</text>
        </g>
        <path d="M591 603V562" stroke="#0f0" stroke-width="3" />
        <path d="M591 553l4 10h-8z" fill="#0f0" />
        <path d="M591 602H628" stroke="#f00" stroke-width="3" />
        <path d="M640 602l-12 -4v8z" fill="#f00" />
        <path d="M601 558l4 5 4-5M605 563v6" stroke="#0f0" fill="none" />
        <path d="M628 586l9 9M637 586l-9 9" stroke="#f00" />
      </svg>

      <div class="snap-wrap">
        <div class="bar snap">
          <template v-for="(it, n) in rowSnap" :key="n">
            <i v-if="it.grip" class="grip" :style="{ marginLeft: it.ml + 'px' }"></i>
            <div v-else class="tool" :class="{ on: it.on }" :style="{ marginLeft: it.ml + 'px', width: it.b - it.a + 'px' }">
              <svg class="ic"><use :href="'#i-' + it.i" /></svg>
              <span class="tt"><Tx :t="it.t || ''" /></span>
            </div>
          </template>
        </div>
        <div class="bar offs">
          <i class="grip"></i>
          <div class="tool box offbox"><span class="tt">不偏移</span><i class="dd btn"></i></div>
          <i class="sep s1"></i>
          <span class="gl lx"><Tx t="X=" /></span>
          <div class="spin sp1"><Tx t="0" /><i class="updown"></i></div>
          <span class="gl"><Tx t="mm" /></span>
          <span class="gl ly"><Tx t="Y=" /></span>
          <div class="spin sp2"><Tx t="0" /><i class="updown"></i></div>
          <span class="gl"><Tx t="mm" /></span>
          <i class="sep s2"></i>
          <i class="chk"></i>
          <span class="tt rot">旋转</span>
          <div class="spin sp3"><Tx t="0.000" /><i class="updown"></i></div>
          <span class="gl"><Tx t="°" /></span>
        </div>
      </div>

      <div class="lower">
        <div class="lower-strip">
          <svg class="close-x" width="10" height="10" viewBox="0 0 10 10"><rect width="10" height="10" rx="2" fill="#e0402a"/><path d="M3 3l4 4M7 3L3 7" stroke="#fff" stroke-width="1.4"/></svg>
          <i class="vdots"></i>
        </div>
        <div class="lower-main">
          <div class="bar edit">
            <template v-for="(it, n) in rowEdit" :key="n">
              <i v-if="it.sep" class="sep" :style="{ marginLeft: it.ml + 'px' }"></i>
              <div v-else class="tool" :class="{ off: it.off }" :style="{ marginLeft: it.ml + 'px', width: it.b - it.a + 'px' }">
                <svg v-if="it.i" class="ic"><use :href="'#i-' + it.i" /></svg>
                <span v-if="it.t" class="tt"><Tx :t="it.t" /></span>
                <i v-if="it.dd" class="dd"></i>
              </div>
            </template>
          </div>
          <div class="grid-wrap">
            <table class="gtable">
              <colgroup><col v-for="(w, n) in gridCols" :key="n" :style="{ width: w + 'px' }" /></colgroup>
              <thead>
                <tr><th v-for="(t, n) in gridHead" :key="n" :class="{ 'sel-h': n === 2, rh: n === 0 }"><Tx :t="t" /></th></tr>
              </thead>
              <tbody>
                <tr class="r1">
                  <td class="rh rh-on"><Tx t="1*" /></td>
                  <td><Tx t="马凳筋.1" /></td>
                  <td class="bl cur"><Tx t="18" /></td>
                  <td class="ctr">虫</td>
                  <td><Tx t="520" /></td>
                  <td class="fig">
                    <svg width="200" height="40" viewBox="0 0 200 40">
                      <path d="M58 21L77 30V9L107 3V28L128 34" fill="none" stroke="#000" stroke-width="2" />
                      <path d="M110 3h22M110 28h22M120 5v21M84 15l21-5M56 24l19 8" stroke="#000" fill="none" />
                      <path d="M120 3l-3 6h6zM120 28l-3-6h6zM105 10l-6-1 1 4zM75 32l-6-1 1-3z" fill="#000" />
                      <text x="47" y="39" class="ftx">300</text><text x="84" y="24" class="ftx">300</text><text x="121" y="20" class="ftx">450</text>
                    </svg>
                  </td>
                  <td><Tx t="300+2*450+2*300" /></td>
                  <td><Tx t="L1+2*L2+2*L3" /></td>
                  <td><Tx t="1800" /></td>
                  <td><Tx t="290" /></td>
                  <td><Tx t="0" /></td>
                  <td><Tx t="0" /></td>
                </tr>
                <tr class="r2">
                  <td class="rh"><Tx t="2" /></td>
                  <td><Tx t="侧面纵筋.1" /></td>
                  <td class="bl"><Tx t="14" /></td>
                  <td class="ctr">虫</td>
                  <td><Tx t="64" /></td>
                  <td class="fig">
                    <svg width="200" height="33" viewBox="0 0 200 33">
                      <path d="M41 8V22H160V8" fill="none" stroke="#000" stroke-width="2" />
                      <text x="19" y="20" class="ftx">210</text><text x="163" y="21" class="ftx">210</text>
                      <text x="86" y="20" class="ftx red">11920</text>
                    </svg>
                  </td>
                  <td><Tx t="12000+15*d-40+15*d-40" /></td>
                  <td class="wrap"><Tx t="净长+弯折-保护层+弯折-保护层" /></td>
                  <td><Tx t="12340" /></td>
                  <td><Tx t="8" /></td>
                  <td><Tx t="812" /></td>
                  <td><Tx t="0" /></td>
                </tr>
                <tr class="r3">
                  <td class="rh"><Tx t="3" /></td>
                  <td></td><td class="bl"></td><td></td><td></td><td></td><td></td><td></td><td></td><td></td><td></td><td></td>
                </tr>
              </tbody>
            </table>
          </div>
        </div>
      </div>
    </section>

    <svg class="notes" width="1471" height="852" viewBox="0 0 1471 852" aria-hidden="true">
      <g fill="#f04848">
        <polygon :points="arrowA" />
        <polygon :points="arrowB" />
        <polygon :points="arrowC" />
      </g>
      <g fill="none" stroke="#e85a5a">
        <ellipse cx="51" cy="481" rx="29" ry="19" />
        <ellipse cx="319" cy="342" rx="55" ry="12" />
        <ellipse cx="1380" cy="754" rx="23" ry="21" />
      </g>
    </svg>
  </div>
</template>

<style scoped>
.app {
  position: relative;
  width: 1471px;
  height: 852px;
  display: flex;
  overflow: hidden;
  background: #ebe8d8;
  font: 12px/16px "Liberation Serif", "Noto Sans CJK SC", sans-serif;
  color: #000;
}
.defs { position: absolute; }
.notes { position: absolute; left: 0; top: 0; pointer-events: none; }

/* sidebar */
.side { width: 122px; flex: none; display: flex; flex-direction: column; height: 852px; }
.tab {
  height: 21px;
  flex: none;
  padding-left: 17px;
  line-height: 21px;
  font-size: 12px;
  background: linear-gradient(#f5f3e8, #e7e4d3);
  border-bottom: 1px solid #c9c6b4;
  overflow: hidden;
}
.tab-clip { height: 7px; line-height: 0; }
.tab-clip span { display: block; margin-top: -2px; height: 6px; overflow: hidden; line-height: 0; }
.side-head {
  height: 26px;
  flex: none;
  margin-top: 1px;
  background: linear-gradient(#f5f3e8, #ebe8d8);
  position: relative;
}
.mark { position: absolute; left: 0; top: 15px; width: 3px; height: 2px; background: #064; }
.side-list {
  height: 780px;
  flex: none;
  background: #fff;
  border: 1px solid #8ea2ba;
  border-left: 0;
  box-sizing: border-box;
  overflow: hidden;
}
.side-row { height: 16px; display: flex; align-items: center; position: relative; padding-left: 4px; white-space: nowrap; }
.side-row.cat { padding-left: 5px; }
.side-row.cad { padding-left: 4px; }
.side-row:not(.cat):not(.cad)::before {
  content: "";
  position: absolute;
  left: 0; top: 8px; width: 4px;
  border-top: 1px dotted #999;
}
.side-ic { width: 15px; height: 15px; flex: none; }
.side-t { margin-left: 5px; }
.wide .side-t { margin-left: 6px; }
.cat .side-t, .cad .side-t { margin-left: 0; }
.hlt { background: #ece9d8; margin-left: 3px; padding-left: 2px; padding-right: 4px; }
.new-ic { width: 15px; height: 15px; flex: none; margin-left: 0; }
.cad .new-ic { margin-left: 6px; }
.new-b {
  align-self: flex-start;
  font: bold 9px/8px "Liberation Sans", sans-serif;
  background: #ffd91a;
  color: #223;
  margin-top: 2px;
  margin-left: 1px;
}
.tab-bottom { margin-top: 4px; height: 16px; padding-left: 12px; line-height: 16px; border: 0; }

/* middle */
.mid { width: 414px; flex: none; box-sizing: border-box; padding: 0 3px 0 6px; display: flex; flex-direction: column; height: 852px; }
.mid-tools { height: 10px; flex: none; display: flex; overflow: hidden; padding-left: 13px; }
.mid-tools .ic { width: 11px; height: 11px; margin-top: -6px; flex: none; }
.mid-tools span { margin-left: 2px; height: 5px; overflow: hidden; line-height: 0; }
.mt2 { margin-left: 19px; }
.mt3 { margin-left: 15px; }
.search { height: 24px; margin-top: 1px; flex: none; display: flex; }
.search-in {
  width: 379px;
  box-sizing: border-box;
  border: 1px solid #7f9db9;
  background: #fff;
  color: #8a8a8a;
  font-size: 12px;
  line-height: 22px;
  padding-left: 3px;
}
.search-btn { flex: 1; display: flex; align-items: center; justify-content: center; background: #ebe8d8; }
.tree {
  height: 120px;
  margin-top: 1px;
  flex: none;
  box-sizing: border-box;
  background: #fff;
  border: 1px solid #7f9db9;
  padding-top: 1px;
  position: relative;
}
.tree-row { height: 16px; display: flex; align-items: center; }
.minus {
  width: 7px; height: 7px; margin-left: 8px; flex: none;
  border: 1px solid #7f9db9;
  background: linear-gradient(to bottom, #fff 0, #fff 3px, #333 3px, #333 4px, #fff 4px) 1px 0 / 5px 100% no-repeat, #e4e9f2;
}
.tree-ic { width: 14px; height: 14px; margin-left: 7px; }
.tree-root { margin-left: 6px; }
.leaf { padding-left: 31px; }
.dots { width: 11px; flex: none; border-top: 1px dotted #999; align-self: center; }
.gear { width: 12px; height: 12px; flex: none; margin-left: 1px; }
.leaf-t { margin-left: 6px; padding: 0 3px 0 2px; width: 26px; height: 16px; line-height: 16px; }
.leaf-t.sel { background: #316ac5; color: #fff; }
.tree::before {
  content: "";
  position: absolute;
  left: 31px; top: 13px; width: 0; height: 28px;
  border-left: 1px dotted #999;
}
.ph {
  height: 15px;
  margin-top: 6px;
  flex: none;
  box-sizing: border-box;
  display: flex;
  justify-content: space-between;
  align-items: center;
  border-top: 1px solid #666;
  border-bottom: 1px solid #666;
  border-radius: 2px;
  font-size: 13px;
  line-height: 13px;
  background: #ebe8d8;
}
.ph-icons { display: flex; gap: 9px; align-items: center; padding-right: 5px; }
.prop-panel {
  flex: 1;
  margin-top: 1px;
  background: #fff;
  border: 1px solid #7f9db9;
  border-bottom: 0;
  padding: 1px 2px 0 1px;
}
.ptable { border-collapse: collapse; table-layout: fixed; width: 399px; }
.c1 { width: 20px; }
.c2 { width: 121px; }
.ptable th, .ptable td {
  border: 1px solid #c0c0c0;
  padding: 0;
  height: 18px;
  font-weight: 400;
  white-space: nowrap;
  overflow: hidden;
  line-height: 16px;
}
.ptable thead th {
  height: 23px;
  background: linear-gradient(#fbfaf4, #e9e6d6);
  text-align: center;
  border-top: 0;
}
.ptable th.val-h { background: linear-gradient(#fbd9a0, #f2c060); color: #660066; }
.ptable .rh {
  background: linear-gradient(#fbfaf4, #e9e6d6);
  text-align: center;
  border-left: 0;
}
.ptable .first .rh { background: #ffd48a; color: #660066; }
.ptable .first .pn { background: #316ac5; color: #fff; }
.ptable .first .pv { background: #e0e8f4; }
.pn { padding-left: 19px !important; }
.pv { padding-left: 2px !important; white-space: pre !important; }
.pv.ind { padding-left: 4px !important; }
.pn.link { color: #0000ff; }
.pn.mute { color: #999; padding-left: 2px !important; }
.plus {
  display: inline-block;
  width: 11px; height: 11px;
  font: 12px/11px "Liberation Sans", sans-serif;
  color: #222;
  text-align: center;
  border: 1px solid #b8b8b8;
  background: #f4f2e8;
  margin-right: 5px;
  vertical-align: -1px;
}

/* right */
.right { flex: 1; min-width: 0; display: flex; flex-direction: column; height: 852px; overflow: hidden; }
.bar-top { height: 17px; flex: none; overflow: hidden; margin-bottom: 3px; }
.bar-top-in { margin-top: -8px; height: 25px; display: flex; align-items: center; white-space: nowrap; background: linear-gradient(#f7f6ee, #ebe8d8); }
.bar {
  height: 24px;
  flex: none;
  display: flex;
  align-items: center;
  white-space: nowrap;
  background: linear-gradient(#f8f7f0, #e9e6d6);
  border-radius: 3px 3px 0 0;
}
.tool {
  height: 100%;
  flex: none;
  box-sizing: border-box;
  display: flex;
  align-items: center;
  gap: 5px;
  position: relative;
}
.tool.on {
  background: #e3e6ee;
  border: 1px solid #316ac5;
  padding-left: 2px;
}
.tool.off { color: #a8a8a8; }
.tool.box { background: #fff; padding-left: 1px; }
.tool.box::after {
  content: "";
  position: absolute;
  right: 0; top: 0; bottom: 0;
  width: 11px;
  background: linear-gradient(#f8f7f0, #e4e1d0);
}
.ic { width: 15px; height: 15px; flex: none; }
.grip {
  flex: none;
  width: 2px; height: 15px;
  background: repeating-linear-gradient(#aaa 0 2px, transparent 2px 4px);
}
.sep { flex: none; width: 1px; height: 15px; background: #b8b5a5; }
.dd { flex: none; width: 0; height: 0; border: 3px solid transparent; border-top: 3px solid #000; border-bottom: 0; margin-left: auto; margin-right: 1px; }
.dd.btn { position: absolute; right: 3px; top: 0; bottom: 0; margin: auto 0; z-index: 1; }
.cad { display: block; flex: none; }

.snap-wrap { height: 26px; flex: none; display: flex; padding-top: 1px; }
.snap { width: 475px; flex: none; height: 25px; }
.snap .on { background: #dce3ef; }
.offs { flex: 1; height: 25px; padding-left: 9px; }
.offs .grip { margin-right: 3px; }
.offbox { width: 56px; height: 20px; padding-left: 2px !important; }
.s1 { margin-left: 7px; }
.lx { margin-left: 1px; width: 13px; color: #888; }
.gl { color: #888; margin-left: 1px; }
.ly { margin-left: 7px; width: 13px; }
.spin {
  height: 17px;
  box-sizing: border-box;
  border: 1px solid #aaa89a;
  color: #8a8a8a;
  text-align: right;
  padding-right: 20px;
  line-height: 14px;
  position: relative;
  background: #ecead9;
}
.sp1 { width: 57px; }
.sp2 { width: 57px; }
.sp3 { width: 67px; margin-left: 6px; }
.updown {
  position: absolute;
  right: 5px; top: 3px;
  width: 0; height: 0;
  border: 3px solid transparent;
  border-bottom: 3px solid #999;
  border-top: 0;
}
.updown::after {
  content: "";
  position: absolute;
  left: -3px; top: 6px;
  width: 0; height: 0;
  border: 3px solid transparent;
  border-top: 3px solid #999;
  border-bottom: 0;
}
.s2 { margin-left: 5px; }
.chk { width: 11px; height: 11px; border: 1px solid #888; margin-left: 3px; flex: none; }
.rot { margin-left: 9px; }

.lower { flex: 1; display: flex; margin-top: 5px; min-height: 0; }
.lower-strip { width: 12px; flex: none; display: flex; flex-direction: column; align-items: center; }
.close-x { flex: none; margin-left: -1px; }
.vdots { flex: 1; width: 2px; margin-top: 6px; background: repeating-linear-gradient(#aaa 0 2px, transparent 2px 4px); }
.lower-main { flex: 1; min-width: 0; display: flex; flex-direction: column; }
.edit { height: 24px; }
.grid-wrap { flex: 1; background: #fff; border-left: 1px solid #7f9db9; border-top: 1px solid #7f9db9; margin-top: 1px; overflow: hidden; }
.gtable { border-collapse: collapse; table-layout: fixed; width: 923px; }
.gtable th, .gtable td {
  border: 1px solid #c0c0c0;
  padding: 0 0 0 2px;
  font-weight: 400;
  height: 18px;
  line-height: 13px;
  overflow: hidden;
  white-space: nowrap;
}
.gtable thead th { height: 18px; padding: 0; border-top: 0; background: linear-gradient(#fbfaf4, #e9e6d6); text-align: center; line-height: 16px; }
.gtable th.sel-h { background: linear-gradient(#fbd9a0, #f2c060); color: #660066; }
.gtable .rh { background: linear-gradient(#fbfaf4, #e9e6d6); text-align: center; padding: 0; border-left: 0; }
.gtable td.rh-on { background: #ffd48a; color: #660066; }
.r1 td { height: 40px; background: #ccffd8; }
.r2 td { height: 33px; background: #ccffd8; }
.gtable .r1 td.rh-on { background: #ffd48a; }
.gtable .r2 td.rh { background: linear-gradient(#fbfaf4, #e9e6d6); }
.gtable td.cur { background: #b5e7d3; }
.gtable td.bl { border-left: 1px solid #000; }
.ctr { text-align: center; padding: 0 !important; }
.fig { padding: 0 !important; }
.fig svg { display: block; }
.ftx { font: 11px "Liberation Sans", sans-serif; fill: #000; }
.ftx.red { fill: #f00; }
.wrap { white-space: normal !important; padding-right: 4px !important; }
</style>

<style>
.lat {
  font-family: "DejaVu Sans Mono", monospace;
  font-size: 10.5px;
  letter-spacing: -0.32px;
}
</style>
